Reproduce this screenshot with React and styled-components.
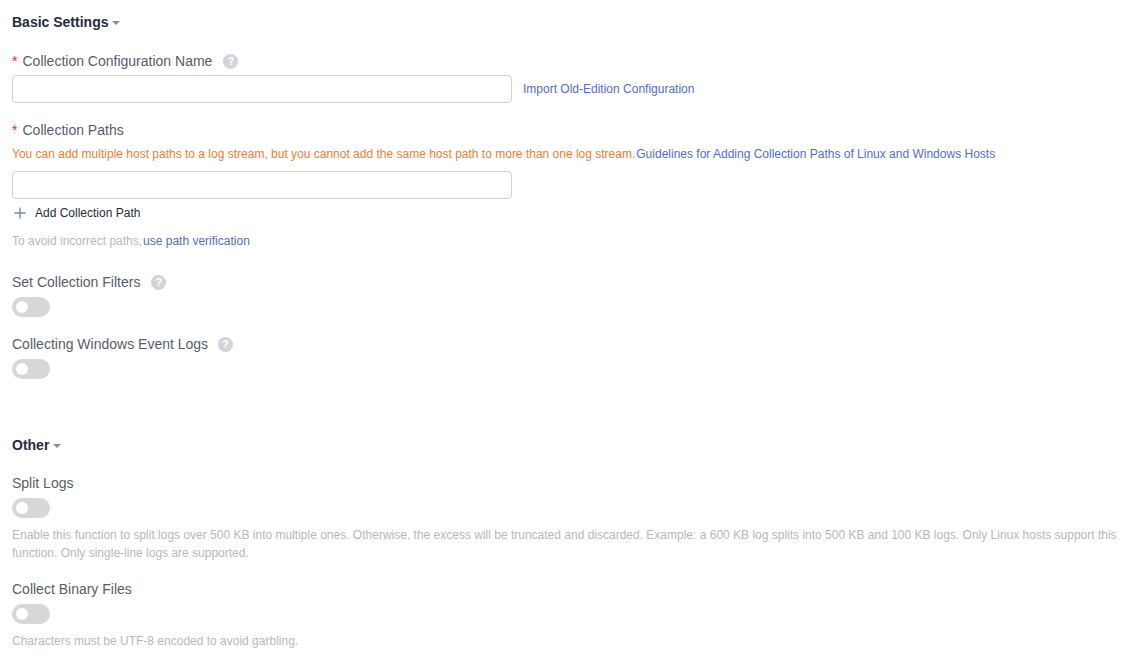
import React from 'react';
import styled, { createGlobalStyle } from 'styled-components';

const Global = createGlobalStyle`
  html, body { margin: 0; padding: 0; background: #fff; }
  body { font-family: "Liberation Sans", Arial, sans-serif; }
`;

const Page = styled.div`
  width: 1142px;
  height: 659px;
  overflow: hidden;
  box-sizing: border-box;
  padding: 12px 12px 0;
  display: flex;
  flex-direction: column;
`;

const SectionTitle = styled.div`
  display: flex;
  align-items: center;
  gap: 4px;
  height: 20px;
  font-size: 14px;
  font-weight: 700;
  color: #252b3a;
  margin-top: ${p => p.$top || 0}px;
`;

const Caret = styled.span`
  width: 0;
  height: 0;
  margin-top: 2px;
  border-left: 4px solid transparent;
  border-right: 4px solid transparent;
  border-top: 4px solid #8a8e99;
`;

const Label = styled.div`
  display: flex;
  align-items: center;
  height: 20px;
  font-size: 14px;
  color: #575d6c;
  margin-top: ${p => p.$top || 0}px;
`;

const Required = styled.span`
  color: #f5222d;
  width: 10.5px;
  font-size: 14px;
`;

const HelpIcon = styled.span`
  width: 15px;
  height: 15px;
  border-radius: 50%;
  background: #d2d3db;
  color: #fff;
  font-size: 11px;
  font-weight: 700;
  line-height: 15px;
  text-align: center;
  margin-left: ${p => p.$gap || 10}px;
`;

const InputRow = styled.div`
  display: flex;
  align-items: center;
  gap: 11px;
  margin-top: ${p => p.$top || 0}px;
`;

const Input = styled.input`
  width: 500px;
  height: 28px;
  box-sizing: border-box;
  border: 1px solid #d0d1d6;
  border-radius: 4px;
  background: #fff;
  outline: none;
  padding: 0 10px;
`;

const Link = styled.a`
  color: #526ecc;
  font-size: 12px;
  text-decoration: none;
  margin-left: ${p => p.$gap || 0}px;
`;

const Note = styled.div`
  font-size: 12px;
  line-height: 18px;
  color: ${p => p.$warn ? '#e8803a' : '#b6b8bd'};
  margin-top: ${p => p.$top || 0}px;
`;

const AddRow = styled.div`
  display: flex;
  align-items: center;
  height: 18px;
  margin-top: 5px;
  font-size: 12px;
  color: #252b3a;
  gap: 9px;
  padding-left: 2px;
`;

const Switch = styled.div`
  position: relative;
  width: 38px;
  height: 20px;
  border-radius: 10px;
  background: #d6d7d9;
  margin-top: ${p => p.$top || 5}px;
  &::after {
    content: "";
    position: absolute;
    left: 4px;
    top: 4px;
    width: 12px;
    height: 12px;
    border-radius: 50%;
    background: #fff;
  }
`;

const PlusIcon = () => (
  <svg width="12" height="12" viewBox="0 0 12 12">
    <path d="M6 .5v11M.5 6h11" stroke="#6f8fb0" strokeWidth="1.4" fill="none" />
  </svg>
);

export default function App() {
  return (
    <Page>
      <Global />
      <SectionTitle>Basic Settings <Caret /></SectionTitle>

      <Label $top={19}><Required>*</Required>Collection Configuration Name<HelpIcon $gap={11}>?</HelpIcon></Label>
      <InputRow $top={4}>
        <Input />
        <Link>Import Old-Edition Configuration</Link>
      </InputRow>

      <Label $top={17}><Required>*</Required>Collection Paths</Label>
      <Note $warn $top={5}>
        You can add multiple host paths to a log stream, but you cannot add the same host path to more than one log stream.
        <Link $gap={1}>Guidelines for Adding Collection Paths of Linux and Windows Hosts</Link>
      </Note>
      <InputRow $top={8}><Input /></InputRow>
      <AddRow><PlusIcon />Add Collection Path</AddRow>
      <Note $top={10}>To avoid incorrect paths,<Link $gap={1}>use path verification</Link></Note>

      <Label $top={22}>Set Collection Filters<HelpIcon $gap={11}>?</HelpIcon></Label>
      <Switch />
      <Label $top={17}>Collecting Windows Event Logs<HelpIcon>?</HelpIcon></Label>
      <Switch />

      <SectionTitle $top={56}>Other <Caret /></SectionTitle>
      <Label $top={18}>Split Logs</Label>
      <Switch />
      <Note $top={8}>
        Enable this function to split logs over 500 KB into multiple ones. Otherwise, the excess will be truncated and discarded. Example: a 600 KB log splits into 500 KB and 100 KB logs. Only Linux hosts support this function. Only single-line logs are supported.
      </Note>
      <Label $top={17}>Collect Binary Files</Label>
      <Switch />
      <Note $top={8}>Characters must be UTF-8 encoded to avoid garbling.</Note>
    </Page>
  );
}
